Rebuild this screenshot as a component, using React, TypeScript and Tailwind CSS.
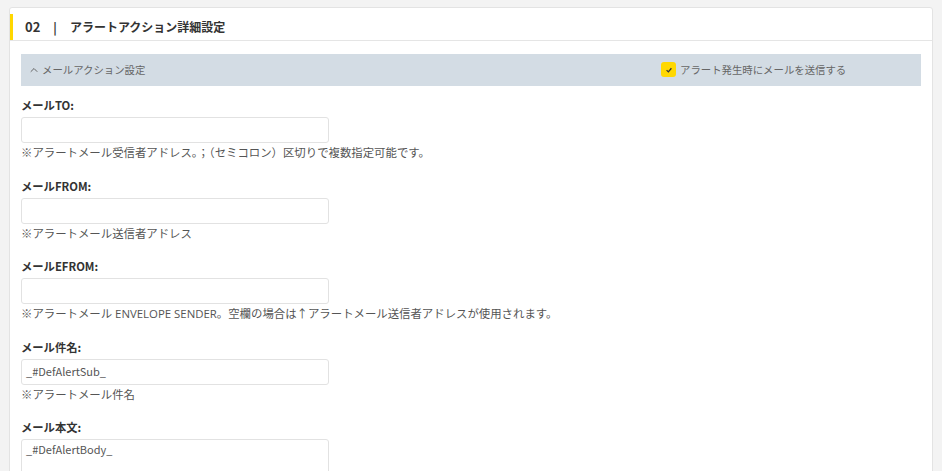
import { ChevronUp } from 'lucide-react';

const font = { fontFamily: '"Noto Sans CJK JP", "Noto Sans", sans-serif' };
const helpFont = { fontFamily: '"Open Sans", "Noto Sans CJK JP", sans-serif' };

const fields = [
  { label: 'メールTO:', value: '', help: '※アラートメール受信者アドレス。；（セミコロン）区切りで複数指定可能です。' },
  { label: 'メールFROM:', value: '', help: '※アラートメール送信者アドレス' },
  {
    label: 'メールEFROM:',
    value: '',
    help: '※アラートメール ENVELOPE SENDER。空欄の場合は↑アラートメール送信者アドレスが使用されます。',
  },
  { label: 'メール件名:', value: '_#DefAlertSub_', help: '※アラートメール件名' },
];

function Field({ label, value, help }: { label: string; value: string; help: string }) {
  return (
    <div className="mb-[16.5px]">
      <div className="h-[16px] text-[11.3px] leading-[16px] font-bold text-[#333]">{label}</div>
      <div className="mt-[4px] flex h-[26px] w-[308px] items-center rounded-[3px] border border-[#e2e2e2] bg-white px-[4px] text-[11px] text-[#555]">
        {value}
      </div>
      <div className="mt-[2px] h-[16px] text-[11.4px] leading-[16px] whitespace-nowrap text-[#555]" style={helpFont}>
        {help}
      </div>
    </div>
  );
}

export default function App() {
  return (
    <div className="h-[471px] w-[942px] overflow-hidden bg-[#f3f3f3]" style={font}>
      <div className="mt-[7px] ml-[9px] h-[480px] w-[924px] rounded-t-[3px] border border-[#e3e3e3] bg-white">
        <div className="border-b border-[#e5e5e5] pt-[6px]">
          <div className="flex h-[26px] items-center border-l-[3px] border-[#ffd700] pl-[12px] text-[12px] font-bold text-[#333]">
            <span className="text-[13px]">02</span>
            <span className="mx-[13px] text-[#333]">|</span>
            <span>アラートアクション詳細設定</span>
          </div>
        </div>
        <div className="px-[11px] pt-[13px]">
          <div className="flex h-[32px] items-center bg-[#d3dce4]">
            <div className="flex flex-1 items-center pl-[7px] text-[10.4px] text-[#666]">
              <ChevronUp className="mr-[2px] h-[12px] w-[12px]" strokeWidth={2} />
              <span>メールアクション設定</span>
            </div>
            <div className="flex w-[260px] items-center text-[10.4px] text-[#666]">
              <span className="mr-[4px] flex h-[15px] w-[15px] items-center justify-center rounded-[3px] bg-[#ffd800]">
                <svg viewBox="0 0 10 10" className="h-[8px] w-[8px]" fill="none" stroke="#333" strokeWidth={1.6}>
                  <path d="M2 5.2 L4.2 7.3 L8 2.8" />
                </svg>
              </span>
              <span>アラート発生時にメールを送信する</span>
            </div>
          </div>
          <div className="mt-[11px]">
            {fields.map((f) => (
              <Field key={f.label} {...f} />
            ))}
            <div className="h-[16px] text-[11.3px] leading-[16px] font-bold text-[#333]">メール本文:</div>
            <div className="mt-[4px] h-[80px] w-[308px] rounded-[3px] border border-[#e2e2e2] bg-white px-[4px] pt-[1px] text-[11px] text-[#555]">
              _#DefAlertBody_
            </div>
          </div>
        </div>
      </div>
    </div>
  );
}
